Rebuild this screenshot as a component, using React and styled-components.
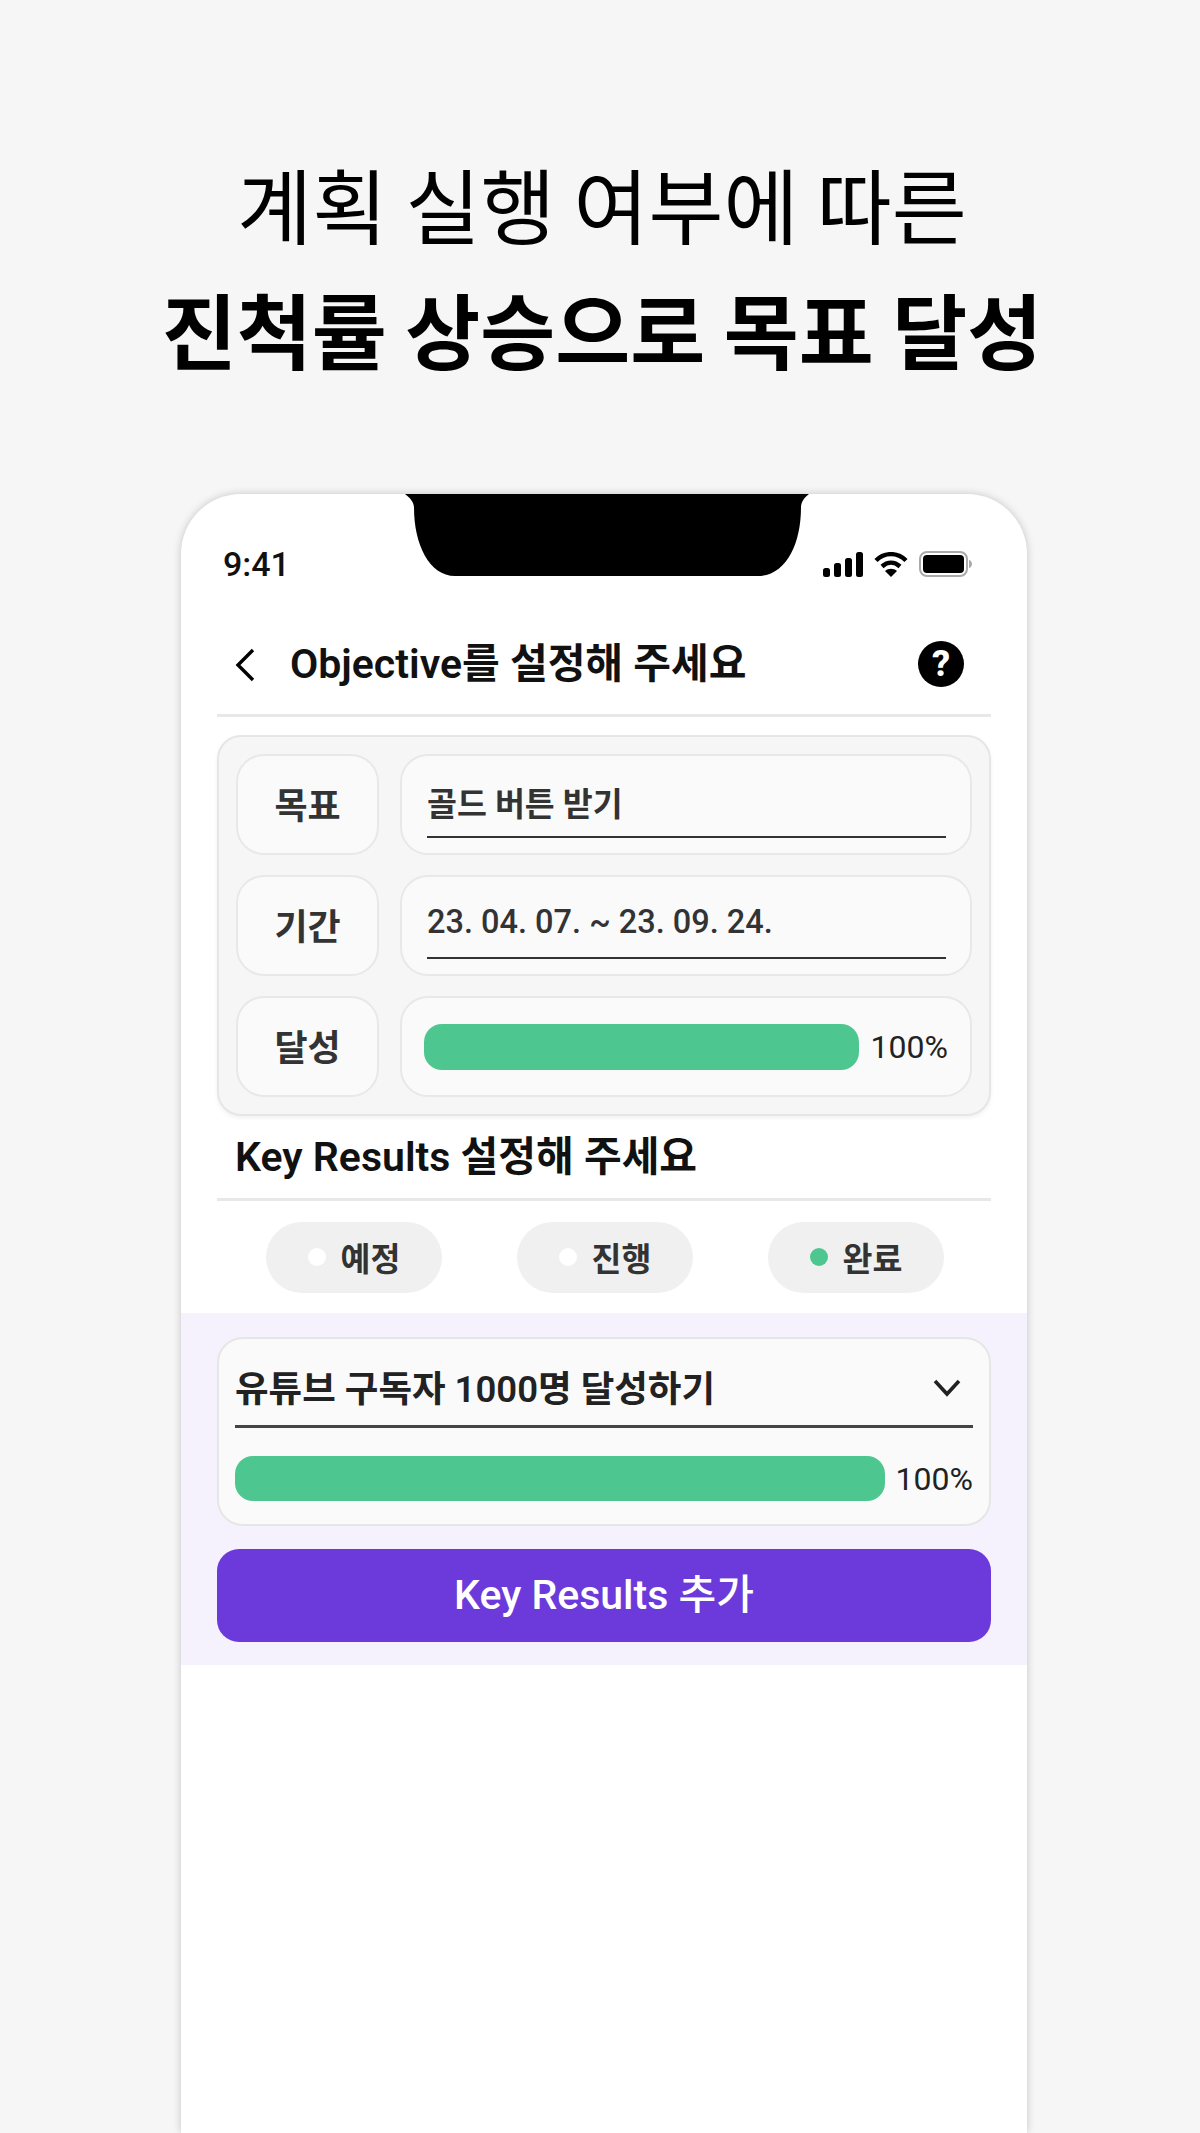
import React from 'react'
import styled, { createGlobalStyle } from 'styled-components'

const GlobalStyle = createGlobalStyle`
  html, body {
    margin: 0;
    padding: 0;
    background: #f6f6f6;
  }
  * {
    box-sizing: border-box;
  }
`

const FONT = `Roboto, "Noto Sans CJK KR", sans-serif`
const GREEN = '#4ec690'

const Page = styled.div`
  height: 2133px;
  overflow: hidden;
  display: flex;
  flex-direction: column;
  align-items: center;
  font-family: ${FONT};
  background: #f6f6f6;
`

const Headline = styled.h1`
  margin: 140px 0 0 4px;
  font-family: "Noto Sans CJK KR", sans-serif;
  font-size: 81.5px;
  line-height: 125px;
  font-weight: 400;
  text-align: center;
  color: #000;
  strong {
    display: block;
    font-weight: 700;
  }
`

const Phone = styled.div`
  position: relative;
  flex: 1;
  width: 846px;
  margin: 104px 0 0 8px;
  background: #fff;
  border-radius: 60px 60px 0 0;
  box-shadow: 0 0 8px rgba(0, 0, 0, 0.2);
  overflow: hidden;
`

const Notch = styled.svg`
  position: absolute;
  top: 0;
  left: 224px;
  width: 404px;
  height: 82px;
`

const StatusBar = styled.div`
  height: 127px;
  padding: 52px 53px 0 42px;
  display: flex;
  justify-content: space-between;
  align-items: flex-start;
`

const Time = styled.span`
  font-size: 34px;
  line-height: 36px;
  font-weight: 500;
  color: #111;
`

const StatusIcons = styled.div`
  display: flex;
  align-items: center;
  gap: 11px;
  height: 36px;
`

const Top = styled.div`
  padding: 0 36px;
`

const Header = styled.div`
  height: 96px;
  padding-bottom: 5px;
  display: flex;
  align-items: center;
  border-bottom: 3px solid #e8e8e8;
`

const BackIcon = styled.svg`
  width: 22px;
  height: 34px;
  margin-left: 17px;
`

const Title = styled.h2`
  flex: 1;
  margin: 0 0 10px 34px;
  font-size: 41px;
  font-weight: 600;
  color: #111;
`

const Help = styled.span`
  width: 46px;
  height: 46px;
  margin: 0 27px 2px 0;
  border-radius: 50%;
  background: #000;
  color: #fff;
  font-size: 36px;
  font-weight: 800;
  line-height: 46px;
  text-align: center;
`

const Card = styled.div`
  margin-top: 18px;
  padding: 17px;
  display: flex;
  flex-direction: column;
  gap: 20px;
  background: #f6f6f6;
  border: 2px solid #e6e6e6;
  border-radius: 24px;
  box-shadow: 0 2px 4px rgba(0, 0, 0, 0.06);
`

const Row = styled.div`
  height: 101px;
  display: grid;
  grid-template-columns: 143px 1fr;
  gap: 21px;
`

const Cell = styled.div`
  background: #fafafa;
  border: 2px solid #e8e8e8;
  border-radius: 28px;
`

const Label = styled(Cell)`
  padding-bottom: 4px;
  display: flex;
  align-items: center;
  justify-content: center;
  font-size: 36px;
  font-weight: 600;
  color: #333;
`

const Field = styled(Cell)`
  padding: 16px 24px 15px 25px;
  display: flex;
`

const FieldValue = styled.div`
  flex: 1;
  display: flex;
  align-items: center;
  padding-bottom: 6px;
  border-bottom: 2px solid #333;
  font-size: 32.5px;
  font-weight: ${(p) => p.$weight};
  color: #333;
`

const BarField = styled(Cell)`
  padding: 0 22px;
  display: flex;
  align-items: center;
  gap: 12px;
`

const Bar = styled.div`
  flex: 1;
  height: ${(p) => p.$height}px;
  border-radius: 18px;
  background: ${GREEN};
`

const Percent = styled.span`
  font-size: 32px;
  color: #222;
`

const SubTitle = styled.h2`
  height: 85px;
  margin: 0;
  padding: 0 0 8px 18px;
  display: flex;
  align-items: center;
  border-bottom: 3px solid #e8e8e8;
  font-size: 41px;
  font-weight: 600;
  color: #111;
`

const Chips = styled.div`
  padding: 21px 0 20px 2px;
  display: flex;
  justify-content: center;
  gap: 75px;
`

const Chip = styled.div`
  width: 176px;
  height: 71px;
  padding-bottom: 2px;
  display: flex;
  align-items: center;
  justify-content: center;
  gap: 15px;
  border-radius: 36px;
  background: #f0f0f0;
  font-size: 32.5px;
  font-weight: 600;
  color: #333;
`

const Dot = styled.i`
  width: 18px;
  height: 18px;
  border-radius: 50%;
  background: ${(p) => (p.$on ? GREEN : '#fff')};
`

const Lavender = styled.div`
  padding: 24px 36px 23px;
  background: #f5f2fd;
`

const ResultCard = styled.div`
  height: 189px;
  padding: 16px 16px 0;
  background: #fafafa;
  border: 2px solid #e6e6e6;
  border-radius: 26px;
`

const ResultHead = styled.div`
  height: 73px;
  padding: 0 12px 8px 0;
  display: flex;
  align-items: center;
  justify-content: space-between;
  border-bottom: 3px solid #444;
  font-size: 36.5px;
  font-weight: 600;
  color: #222;
  svg {
    margin-top: 4px;
  }
`

const ResultBar = styled.div`
  margin-top: 28px;
  display: flex;
  align-items: center;
  gap: 11px;
`

const AddButton = styled.button`
  width: 100%;
  height: 93px;
  margin-top: 23px;
  padding: 0 0 10px;
  border: none;
  border-radius: 22px;
  background: #6c3adb;
  color: #fff;
  font-family: ${FONT};
  font-size: 41px;
  font-weight: 500;
`

const App = () => {
  return (
    <Page>
      <GlobalStyle />
      <Headline>
        계획 실행 여부에 따른
        <strong>진척률 상승으로 목표 달성</strong>
      </Headline>
      <Phone>
        <Notch viewBox="0 0 403 82" preserveAspectRatio="none">
          <path d="M0 0H403C398 4 395 8 395 14C395 50 380 82 352 82H50C24 82 9 50 9 14C9 8 5 4 0 0Z" fill="#000" />
        </Notch>
        <StatusBar>
          <Time>9:41</Time>
          <StatusIcons>
            <svg width="40" height="25" viewBox="0 0 40 25" fill="#000">
              <rect x="0" y="16" width="7" height="9" rx="2.5" />
              <rect x="11" y="11" width="7" height="14" rx="2.5" />
              <rect x="22" y="6" width="7" height="19" rx="2.5" />
              <rect x="33" y="0" width="7" height="25" rx="2.5" />
            </svg>
            <svg width="34" height="25" viewBox="0 0 34 25" fill="none" stroke="#000" strokeWidth="4.4">
              <path d="M2 8.5C10.5 0 23.5 0 32 8.5" />
              <path d="M8 14.5C13.5 9.5 20.5 9.5 26 14.5" />
              <path d="M17 25L11 19C14.5 16 19.5 16 23 19Z" fill="#000" stroke="none" />
            </svg>
            <svg width="55" height="26" viewBox="0 0 55 26">
              <rect x="1" y="1" width="47" height="24" rx="7" fill="none" stroke="#aaa" strokeWidth="2" />
              <rect x="4" y="4" width="41" height="18" rx="4" fill="#000" />
              <path d="M50 9C54 10 54 16 50 17Z" fill="#aaa" />
            </svg>
          </StatusIcons>
        </StatusBar>
        <Top>
          <Header>
            <BackIcon viewBox="0 0 22 34" fill="none" stroke="#000" strokeWidth="3.4">
              <path d="M19 2L4 17L19 32" />
            </BackIcon>
            <Title>Objective를 설정해 주세요</Title>
            <Help>?</Help>
          </Header>
          <Card>
            <Row>
              <Label>목표</Label>
              <Field>
                <FieldValue $weight={600}>골드 버튼 받기</FieldValue>
              </Field>
            </Row>
            <Row>
              <Label>기간</Label>
              <Field>
                <FieldValue $weight={500}>23. 04. 07. ~ 23. 09. 24.</FieldValue>
              </Field>
            </Row>
            <Row>
              <Label>달성</Label>
              <BarField>
                <Bar $height={46} />
                <Percent>100%</Percent>
              </BarField>
            </Row>
          </Card>
          <SubTitle>Key Results 설정해 주세요</SubTitle>
          <Chips>
            <Chip><Dot />예정</Chip>
            <Chip><Dot />진행</Chip>
            <Chip><Dot $on />완료</Chip>
          </Chips>
        </Top>
        <Lavender>
          <ResultCard>
            <ResultHead>
              유튜브 구독자 1000명 달성하기
              <svg width="28" height="18" viewBox="0 0 28 18" fill="none" stroke="#222" strokeWidth="3.6">
                <path d="M2 2L14 15L26 2" />
              </svg>
            </ResultHead>
            <ResultBar>
              <Bar $height={45} />
              <Percent>100%</Percent>
            </ResultBar>
          </ResultCard>
          <AddButton>Key Results 추가</AddButton>
        </Lavender>
      </Phone>
    </Page>
  )
}

export default App
